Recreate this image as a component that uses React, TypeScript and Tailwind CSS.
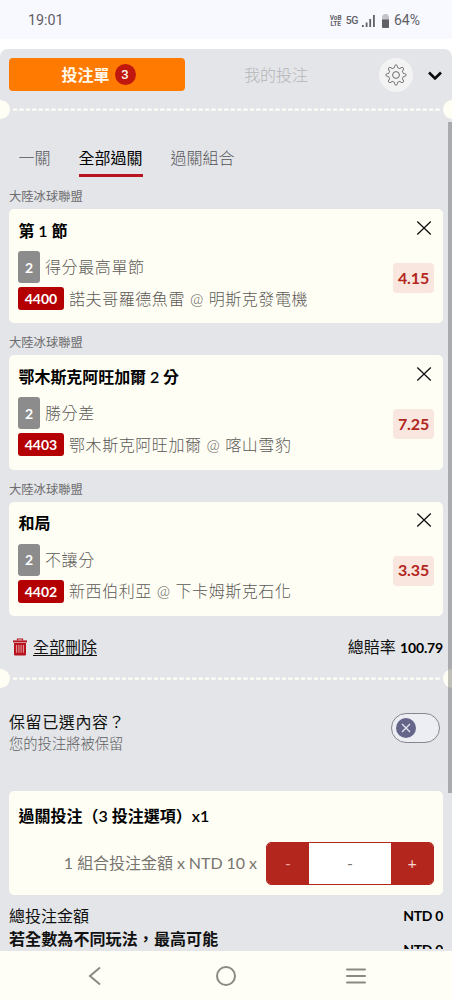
import React from 'react';

interface Bet {
  title: string;
  count: number;
  market: string;
  code: string;
  teams: string;
  odds: string;
}

const bets: Bet[] = [
  { title: '第 1 節', count: 2, market: '得分最高單節', code: '4400', teams: '諾夫哥羅德魚雷 @ 明斯克發電機', odds: '4.15' },
  { title: '鄂木斯克阿旺加爾 2 分', count: 2, market: '勝分差', code: '4403', teams: '鄂木斯克阿旺加爾 @ 喀山雪豹', odds: '7.25' },
  { title: '和局', count: 2, market: '不讓分', code: '4402', teams: '新西伯利亞 @ 下卡姆斯克石化', odds: '3.35' },
];

// eight-toothed gear outline
const GearIcon: React.FC = () => (
  <svg width="22" height="22" viewBox="0 0 22 22" fill="none" stroke="#6b6b6b" strokeWidth="1" strokeLinejoin="round">
    <path d="M9.6 2.4Q9.8.9 11 .9T12.4 2.4L12.7 3.8Q13.8 4.1 14.8 4.6L16 3.8Q17.3 2.9 18.2 3.8T18.2 6L17.4 7.2Q17.9 8.2 18.2 9.3L19.6 9.6Q21.1 9.8 21.1 11T19.6 12.4L18.2 12.7Q17.9 13.8 17.4 14.8L18.2 16Q19.1 17.3 18.2 18.2T16 18.2L14.8 17.4Q13.8 17.9 12.7 18.2L12.4 19.6Q12.2 21.1 11 21.1T9.6 19.6L9.3 18.2Q8.2 17.9 7.2 17.4L6 18.2Q4.7 19.1 3.8 18.2T3.8 16L4.6 14.8Q4.1 13.8 3.8 12.7L2.4 12.4Q.9 12.2.9 11T2.4 9.6L3.8 9.3Q4.1 8.2 4.6 7.2L3.8 6Q2.9 4.7 3.8 3.8T6 3.8L7.2 4.6Q8.2 4.1 9.3 3.8Z" />
    <circle cx="11" cy="11" r="3.4" />
  </svg>
);

const TrashIcon: React.FC = () => (
  <svg width="14" height="18" viewBox="0 0 14 18" fill="none">
    <path d="M4.5 2.5V1h5v1.5" stroke="#b81420" strokeWidth="1.2" />
    <path d="M0 2.4h14v2H0z" fill="#b81420" />
    <path d="M1 5h12v11.5q0 1-1 1H2q-1 0-1-1z" fill="#b81420" />
    <path d="M3.6 7v7.8M5.9 7v7.8M8.1 7v7.8M10.4 7v7.8" stroke="#efc4c2" strokeWidth=".8" />
  </svg>
);

const StatusBar: React.FC = () => (
  <header className="flex h-[39px] items-center justify-between bg-[#f8f8ff] pr-8 pl-7 pt-[2px] font-[Roboto,sans-serif] text-[#606066]">
    <span className="text-[14.300px]">19:01</span>
    <div className="flex items-center">
      <div className="mr-[4px] flex flex-col items-center text-[6.500px] leading-[6px] font-bold">
        <span>VoB</span>
        <span>LTE</span>
      </div>
      <span className="mr-[4px] text-[10.500px] font-medium tracking-[-0.400px]">5G</span>
      <svg className="mr-[7px]" width="13" height="12" viewBox="0 0 13 12" fill="#606066">
        <path d="M0 10h1.800v2H0zM3.700 7.500h1.800V12H3.700zM7.300 4h1.800v8H7.300zM11 0h1.800v12H11z" />
      </svg>
      <svg className="mr-[5px]" width="7" height="14" viewBox="0 0 7 14">
        <path d="M1.500 0h4v1.200H6q1 0 1 1V6H0V2.200q0-1 1-1h.5z" fill="#c4c4ca" />
        <path d="M0 5.500h7V13q0 1-1 1H1q-1 0-1-1z" fill="#606066" />
      </svg>
      <span className="text-[14px]">64%</span>
    </div>
  </header>
);

// perforated ticket edge with a notch on each side
const Perforation: React.FC = () => (
  <div className="flex h-[19px] items-center overflow-hidden">
    <div className="-ml-[9px] size-[19px] shrink-0 rounded-full bg-[#fffef5]" />
    <svg className="mx-[2px] h-[3px] flex-1" preserveAspectRatio="none">
      <line x1="1" y1="1.700" x2="440" y2="1.700" stroke="#fffef5" strokeWidth="2.200" strokeDasharray="4.200 2.200" />
    </svg>
    <div className="-mr-[10px] size-[19px] shrink-0 rounded-full bg-[#fffef5]" />
  </div>
);

const BetCard: React.FC<{ bet: Bet }> = ({ bet }) => (
  <section className="h-[146.300px]">
    <div className="h-[26px] pt-[5px] text-[12.300px] leading-[18px] text-[#6d6d6f]">大陸冰球聯盟</div>
    <div className="flex h-[114.300px] justify-between rounded-[5px] bg-[#fffef5] pr-[9px] pl-[9px]">
      <div className="pt-[9.500px]">
        <h3 className="h-[32.500px] pl-[0.500px] text-[16px] leading-[24px] font-semibold tracking-[-0.060px] text-black">{bet.title}</h3>
        <div className="flex h-[32px] items-center text-[16px] font-light tracking-[0.600px] text-[#5c5a55]">
          <span className="mr-[5px] flex h-[32px] w-[22px] items-center justify-center rounded-[3px] bg-[#8c8c8c] text-[14px] font-bold tracking-normal text-white">{bet.count}</span>
          {bet.market}
        </div>
        <div className="mt-[4px] flex h-[23px] items-center text-[16px] font-light tracking-[0.570px] text-[#5c5a55]">
          <span className="mr-[5px] flex h-[23px] w-[46px] items-center justify-center rounded-[3px] bg-[#b40003] text-[14px] font-bold tracking-normal text-white">{bet.code}</span>
          {bet.teams}
        </div>
      </div>
      <div className="flex flex-col items-end pt-[11.500px]">
        <svg className="mr-[2px]" width="16" height="14" viewBox="0 0 16 14" stroke="#111" strokeWidth="1.300">
          <path d="M1.300.5l13.500 13M14.800.5l-13.500 13" />
        </svg>
        <span className="mt-[28.500px] flex h-[30px] w-[41px] items-center justify-center rounded-[4px] bg-[#f8e6df] pb-px text-[16px] font-bold tracking-[-0.150px] text-[#b3261e]">{bet.odds}</span>
      </div>
    </div>
  </section>
);

const App: React.FC = () => {
  return (
    <div className="flex h-[1000px] w-[452px] flex-col overflow-hidden bg-white font-[Lato,'Noto_Sans_CJK_TC',sans-serif]">
      <StatusBar />

      <main className="relative mt-[10px] h-[902px] overflow-hidden rounded-t-[8px] bg-[#e3e5e8] text-[#111]">
        {/* Header */}
        <div className="flex h-[51px] items-center pl-[9px]">
          <button className="flex h-[33px] w-[176px] items-center justify-center gap-[5px] rounded-[4px] bg-[#ff7a00] pl-[3px] text-[16px] font-bold text-[#fff8ea]">
            投注單
            <span className="flex size-[21px] items-center justify-center rounded-full bg-[#c0180f] font-[Roboto,sans-serif] text-[13px] leading-none font-medium">3</span>
          </button>
          <button className="ml-[59px] text-[16px] font-light text-[#b5b5b7]">我的投注</button>
          <button className="ml-[71px] flex size-[34px] items-center justify-center rounded-full bg-[#f3f3f4]"><GearIcon /></button>
          <svg className="mt-[2px] ml-[15px]" width="14" height="10" viewBox="0 0 14 10" fill="none" stroke="#0a0a0a" strokeWidth="2.600">
            <path d="M1 1.500l6 6 6-6" />
          </svg>
        </div>

        <Perforation />

        {/* Parlay tabs */}
        <nav className="mt-[27px] flex h-[31px] gap-[28px] pl-[18.500px] text-[16px] font-light text-[#55565a]">
          <button className="h-[24px]">一關</button>
          <button className="flex h-[31px] items-start border-b-3 border-[#b8141f] font-normal text-black">全部過關</button>
          <button className="h-[24px]">過關組合</button>
        </nav>

        <div className="mt-[6px] px-[9px]">
          {bets.map((bet) => (
            <BetCard key={bet.code} bet={bet} />
          ))}
        </div>

        <div className="-mt-[3px] flex h-[50px] items-center justify-between pt-[7px] pr-[9px] pl-[13px] text-[16px]">
          <button className="flex items-center gap-[6px] underline underline-offset-2"><TrashIcon />全部刪除</button>
          <span>總賠率 <b className="text-[14px] font-bold tracking-[-0.150px] text-black">100.79</b></span>
        </div>

        <Perforation />

        {/* Keep selections */}
        <div className="mt-[22px] flex items-start justify-between pr-[12px] pl-[9px]">
          <div>
            <div className="h-[23px] text-[16px] leading-[24px] tracking-[0.600px]">保留已選內容？</div>
            <div className="text-[14.300px] leading-[22px] font-light text-[#606064]">您的投注將被保留</div>
          </div>
          <button className="mt-[3px] flex h-[30px] w-[49px] items-center rounded-full border border-[#85858d] bg-[#eceef3] pl-[4px]">
            <svg width="20" height="20" viewBox="0 0 20 20">
              <circle cx="10" cy="10" r="10" fill="#65658a" />
              <path d="M6 6l8 8M14 6l-8 8" stroke="#e8e8f0" strokeWidth="1.200" />
            </svg>
          </button>
        </div>

        {/* Stake */}
        <div className="mx-[9px] mt-[36px] h-[104px] rounded-[5px] bg-[#fffef5] px-[9px] pt-[13px]">
          <h3 className="h-[38px] pl-[0.500px] text-[16px] leading-[24px] font-semibold text-black">過關投注（3 投注選項）x1</h3>
          <div className="flex items-center justify-end text-[16px] tracking-[-0.050px] text-[#77756f]">
            1 組合投注金額 x NTD 10 x
            <div className="ml-[9px] flex h-[43px] w-[168px] overflow-hidden rounded-[5px] border border-[#b3261e] bg-white">
              <button className="w-[42px] bg-[#b3261e] text-[#f5a59d]">-</button>
              <span className="flex flex-1 items-center justify-center">-</span>
              <button className="w-[42px] bg-[#b3261e] text-[#f5d5cd]">+</button>
            </div>
          </div>
        </div>

        <div className="mt-[9px] flex h-[24px] items-center justify-between px-[9px] text-[16px] leading-[24px]">
          <span>總投注金額</span>
          <b className="text-[14px] font-bold tracking-[-0.300px] text-black">NTD 0</b>
        </div>
        <div className="flex h-[17px] items-start justify-between px-[9px] text-[16px] leading-[24px] font-bold">
          <span className="-mt-px tracking-[0.100px]">若全數為不同玩法，最高可能</span>
          <span className="mt-[15px] h-[6px] overflow-hidden text-[14px] leading-[14px] tracking-[-0.300px] text-black">NTD 0</span>
        </div>

        {/* Scrollbar thumb laid over the content */}
        <div className="absolute top-[73px] right-0 h-[671px] w-[4px] bg-black/25" />
      </main>

      <footer className="flex h-[49px] items-center bg-[#fffef6]">
        <svg className="ml-[88px]" width="14" height="20" viewBox="0 0 14 20" fill="none" stroke="#8b8984" strokeWidth="2">
          <path d="M12 1.500L2 10l10 8.500" />
        </svg>
        <svg className="ml-[113px]" width="22" height="22" viewBox="0 0 22 22" fill="none" stroke="#8b8984" strokeWidth="2">
          <circle cx="11" cy="11" r="9" />
        </svg>
        <svg className="ml-[108px]" width="22" height="18" viewBox="0 0 22 18" stroke="#8b8984" strokeWidth="2" strokeLinecap="round">
          <path d="M2 2.500h18M2 9h18M2 15.500h18" />
        </svg>
      </footer>
    </div>
  );
};

export default App;
